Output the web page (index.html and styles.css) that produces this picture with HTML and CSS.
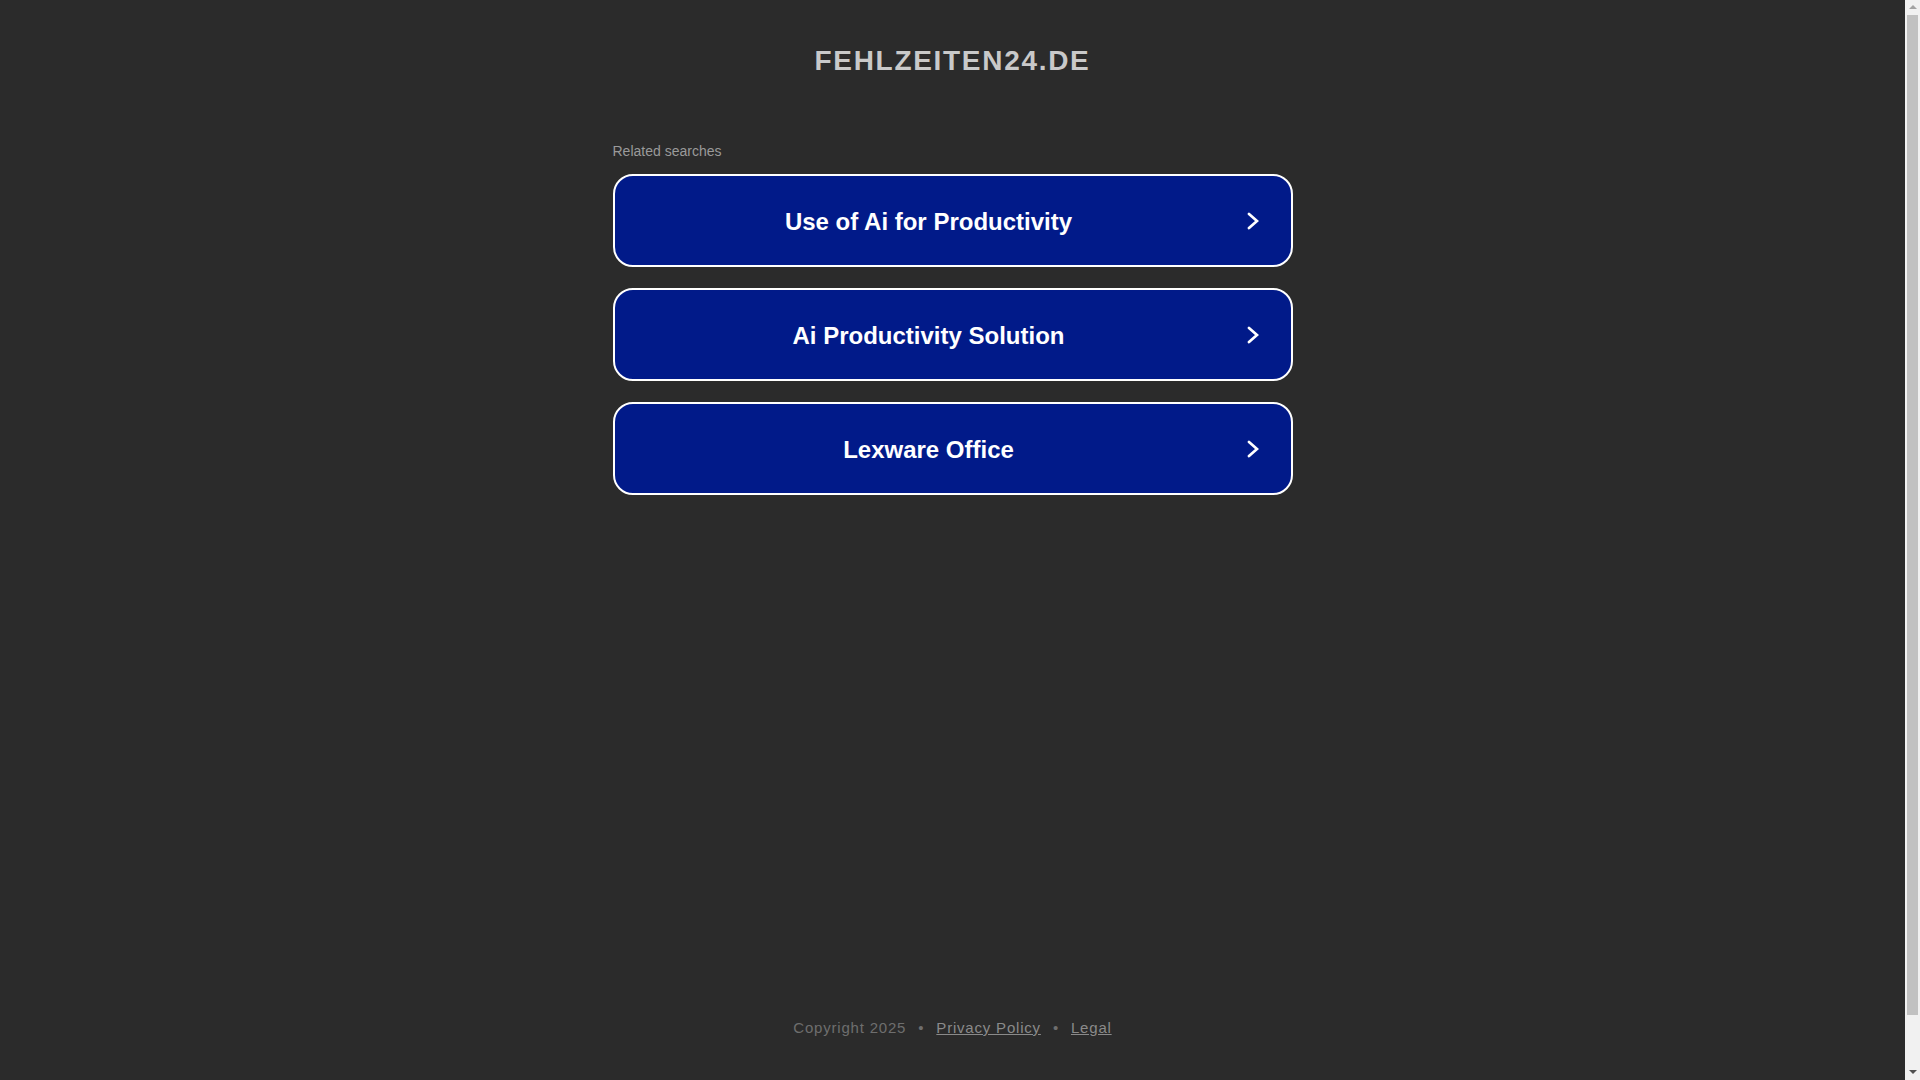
FILE: index.html
```html
<!DOCTYPE html>
<html lang="en">
<head>
<meta charset="utf-8">
<title>fehlzeiten24.de</title>
<link rel="stylesheet" href="styles.css">
</head>
<body>
<div class="page">
  <header class="header">
    <h1 class="domain">FEHLZEITEN24.DE</h1>
  </header>
  <main class="main">
    <div class="related-label">Related searches</div>
    <div class="links">
      <a class="link-btn" href="#"><span class="link-text">Use of Ai for Productivity</span><svg class="chev" viewBox="0 0 12 18" width="12" height="18"><polyline points="2,2 10,9 2,16" fill="none" stroke="#fff" stroke-width="2.7" stroke-linecap="round" stroke-linejoin="miter"/></svg></a>
      <a class="link-btn" href="#"><span class="link-text">Ai Productivity Solution</span><svg class="chev" viewBox="0 0 12 18" width="12" height="18"><polyline points="2,2 10,9 2,16" fill="none" stroke="#fff" stroke-width="2.7" stroke-linecap="round" stroke-linejoin="miter"/></svg></a>
      <a class="link-btn" href="#"><span class="link-text">Lexware Office</span><svg class="chev" viewBox="0 0 12 18" width="12" height="18"><polyline points="2,2 10,9 2,16" fill="none" stroke="#fff" stroke-width="2.7" stroke-linecap="round" stroke-linejoin="miter"/></svg></a>
    </div>
  </main>
  <footer class="footer">
    <span class="copy">Copyright 2025</span>
    <span class="dot">•</span>
    <a class="foot-link" href="#">Privacy Policy</a>
    <span class="dot">•</span>
    <a class="foot-link" href="#">Legal</a>
  </footer>
</div>
<div class="fake-scrollbar" aria-hidden="true">
  <div class="sb-arrow sb-up"></div>
  <div class="sb-thumb"></div>
  <div class="sb-arrow sb-down"></div>
</div>
</body>
</html>
```
FILE: styles.css
```css
html, body {
  margin: 0;
  padding: 0;
  background: #2b2b2b;
  overflow: hidden;
}
body {
  font-family: "Liberation Sans", Arial, sans-serif;
  padding-right: 15px;
}
.page {
  height: 1080px;
  display: flex;
  flex-direction: column;
  align-items: center;
}
.header {
  padding-top: 45px;
}
.domain {
  margin: 0;
  font-size: 28px;
  line-height: 32px;
  font-weight: bold;
  letter-spacing: 1.7px;
  color: #c9c9c9;
  text-align: center;
}
.main {
  width: 680px;
  margin-top: 65px;
}
.related-label {
  font-size: 14px;
  line-height: 18px;
  color: #9a9a9a;
}
.links {
  margin-top: 14px;
  display: flex;
  flex-direction: column;
  gap: 21px;
}
.link-btn {
  box-sizing: border-box;
  height: 93px;
  display: flex;
  align-items: center;
  background: #011a89;
  border: 2px solid #ffffff;
  border-radius: 20px;
  text-decoration: none;
  color: #ffffff;
}
.link-text {
  flex: 1;
  text-align: center;
  font-size: 24px;
  line-height: 30px;
  padding-top: 2px;
  font-weight: bold;
}
.chev {
  margin-left: 4px;
  margin-right: 32px;
  flex: none;
}
.footer {
  margin-top: auto;
  padding-bottom: 42px;
  font-size: 15px;
  line-height: 20px;
  letter-spacing: 0.8px;
  color: #6e6e6e;
  display: flex;
  gap: 12px;
}
.foot-link {
  color: #8a8a8a;
  text-decoration: underline;
}
.dot {
  color: #6e6e6e;
}
.fake-scrollbar {
  position: fixed;
  top: 0;
  right: 0;
  width: 15px;
  height: 1080px;
  background: #f1f1f1;
  display: flex;
  flex-direction: column;
  align-items: center;
}
.sb-arrow {
  flex: none;
  width: 0;
  height: 0;
  border-left: 4px solid transparent;
  border-right: 4px solid transparent;
}
.sb-up {
  margin-top: 5px;
  margin-bottom: 6px;
  border-bottom: 4px solid #a3a3a3;
}
.sb-down {
  margin-top: auto;
  margin-bottom: 6px;
  border-top: 4px solid #505050;
}
.sb-thumb {
  flex: none;
  width: 11px;
  height: 1000px;
  background: #c1c1c1;
}
```
